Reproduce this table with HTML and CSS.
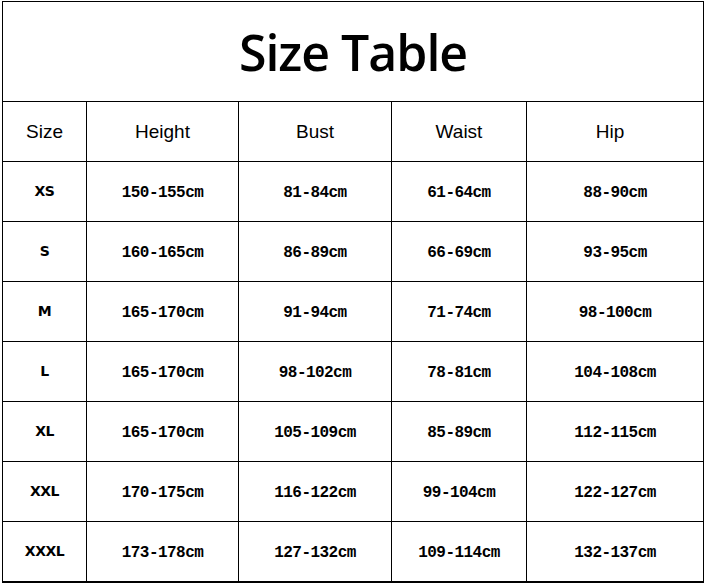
FILE: index.html
```html
<!DOCTYPE html>
<html>
<head>
<meta charset="utf-8">
<link rel="stylesheet" href="styles.css">
</head>
<body>
<table class="size-table">
  <colgroup>
    <col class="c1"><col class="c2"><col class="c3"><col class="c4"><col class="c5">
  </colgroup>
  <tr class="title-row"><th colspan="5" class="title">Size Table</th></tr>
  <tr class="head-row">
    <th>Size</th><th>Height</th><th>Bust</th><th>Waist</th><th class="hip">Hip</th>
  </tr>
  <tr><td class="sz">XS</td><td>150-155cm</td><td>81-84cm</td><td>61-64cm</td><td>88-90cm</td></tr>
  <tr><td class="sz">S</td><td>160-165cm</td><td>86-89cm</td><td>66-69cm</td><td>93-95cm</td></tr>
  <tr><td class="sz">M</td><td>165-170cm</td><td>91-94cm</td><td>71-74cm</td><td>98-100cm</td></tr>
  <tr><td class="sz">L</td><td>165-170cm</td><td>98-102cm</td><td>78-81cm</td><td>104-108cm</td></tr>
  <tr><td class="sz">XL</td><td>165-170cm</td><td>105-109cm</td><td>85-89cm</td><td>112-115cm</td></tr>
  <tr><td class="sz">XXL</td><td>170-175cm</td><td>116-122cm</td><td>99-104cm</td><td>122-127cm</td></tr>
  <tr class="last"><td class="sz">XXXL</td><td>173-178cm</td><td>127-132cm</td><td>109-114cm</td><td>132-137cm</td></tr>
</table>
</body>
</html>
```
FILE: styles.css
```css
html, body {
  margin: 0;
  padding: 0;
  background: #fff;
}
body {
  padding: 1px 0 0 2px;
}
.size-table {
  border-collapse: collapse;
  table-layout: fixed;
  width: 701px;
  color: #000;
}
.c1 { width: 84px; }
.c2 { width: 152px; }
.c3 { width: 153px; }
.c4 { width: 135px; }
.c5 { width: 177px; }
.size-table th,
.size-table td {
  border: 1px solid #000;
  padding: 0;
  text-align: center;
  vertical-align: middle;
  height: 59px;
}
.title-row th {
  height: 99px;
  font-family: "Open Sans", sans-serif;
  font-weight: 600;
  font-size: 50px;
  letter-spacing: -1px;
}
.head-row th {
  font-family: "Liberation Sans", Arial, sans-serif;
  font-weight: normal;
  font-size: 19px;
}
.head-row th.hip {
  padding-right: 10px;
}
.size-table td {
  font-family: "Liberation Mono", monospace;
  font-weight: bold;
  font-size: 16px;
  letter-spacing: -0.55px;
  height: 56px;
  padding: 3px 0 0;
}
.size-table td.sz {
  font-family: "DejaVu Sans", sans-serif;
  font-size: 14px;
  font-weight: bold;
  letter-spacing: -0.5px;
  padding: 1px 0 2px;
}
.last td {
  border-bottom: 2px solid #000;
}
```
